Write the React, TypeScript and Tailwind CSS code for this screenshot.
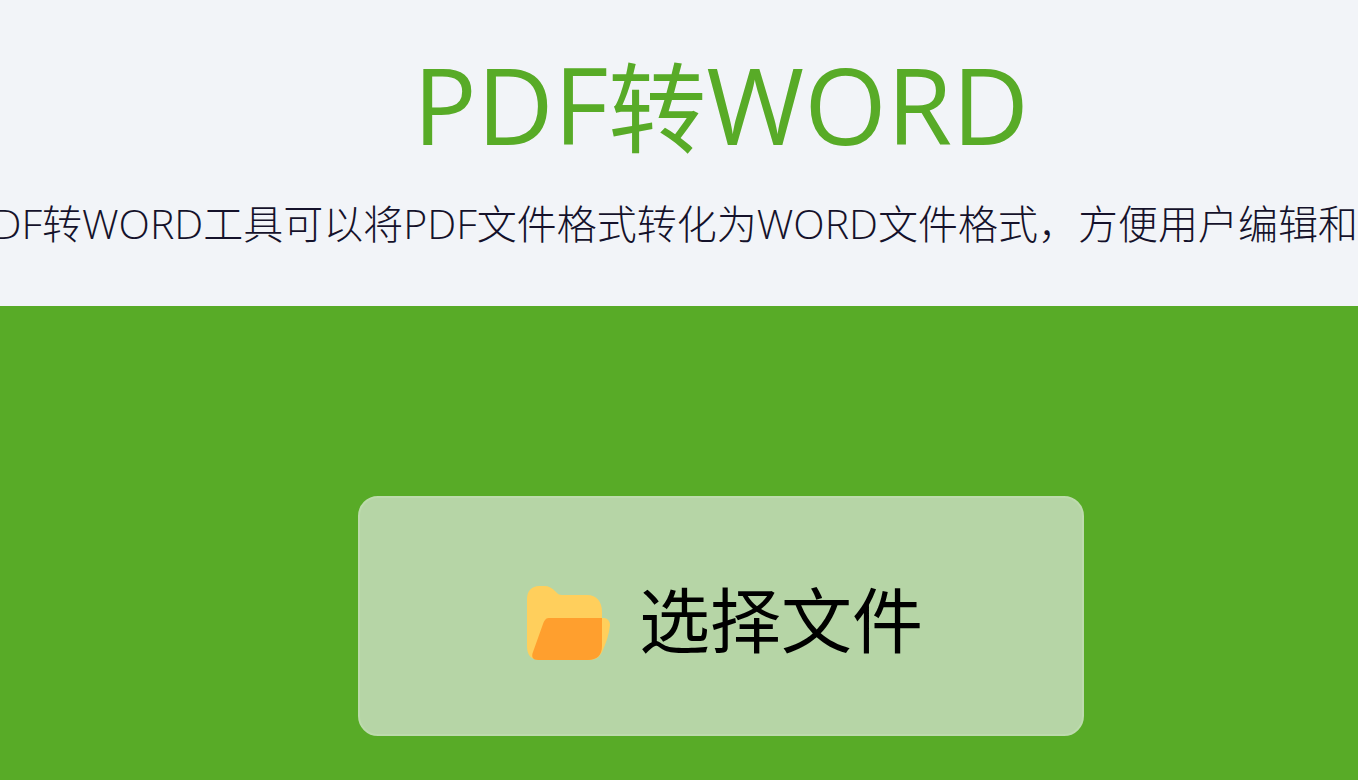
function FolderIcon() {
  return (
    <svg viewBox="0 0 84 76" className="mt-1.5 h-[76px] w-[84px] shrink-0" aria-hidden="true">
      <path d="M0 14C0 6 5 1 12 1H17C22 1 25 3 28 6L30 8C32 10 34 10 37 10H60C70 10 75 17 75 27V33H77C80 33 83 36 83 40C82 50 79 58 75 67C72 73 68 75 61 75H13C4 75 0 70 0 61Z" fill="#ffcf5c" />
      <path d="M23 33H75V61C75 70 70 75 61 75H11C6 75 4 72 6 67L16 39C18 34 19 33 23 33Z" fill="#ff9f2e" />
    </svg>
  );
}

export default function App() {
  return (
    <main className="flex min-h-screen flex-col overflow-hidden bg-[#f2f4f8] font-['Open_Sans','Noto_Sans_CJK_SC',sans-serif]">
      <header className="flex flex-col pt-11 pb-[50px]">
        <h1 className="h-[120px] pl-[84px] text-center text-[106px] leading-[120px] whitespace-nowrap text-[#58ab27]">
          PDF<span className="text-[98px]">转</span>WORD
        </h1>
        <p className="mt-[26px] flex h-[66px] w-full justify-end text-[40px] leading-[66px] font-light whitespace-nowrap text-[#15122b]">
          <span>
            <span className="text-[41px]">PDF</span>转<span className="text-[41px]">WORD</span>工具可以将<span className="text-[41px]">PDF</span>文件格式转化为<span className="text-[41px]">WORD</span>文件格式，方便用户编辑和
          </span>
        </p>
      </header>
      <section className="flex grow items-end justify-center bg-[#58ab27] pt-[190px] pb-11 pl-[84px]">
        <button type="button" className="flex h-60 w-[726px] items-center justify-center gap-7 rounded-[20px] border-2 border-[#bddbad] bg-[#b6d5a6] pt-2 pl-2 text-[71px] leading-[100px] text-black">
          <FolderIcon />
          <span>选择文件</span>
        </button>
      </section>
    </main>
  );
}
